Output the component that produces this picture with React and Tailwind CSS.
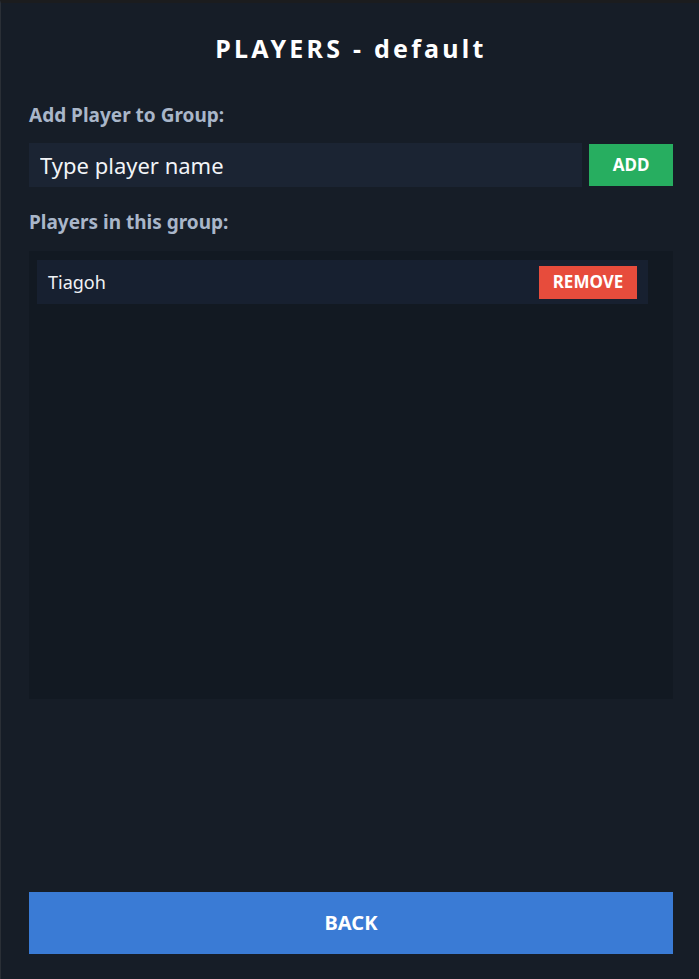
export default function App() {
    const players = ['Tiagoh'];

    return (
        <div
            className="w-[699px] h-[979px] bg-[#161d27] border-t-[3px] border-l border-t-[#1b1c1e] border-l-[#2a2f36] flex flex-col pl-[28px] pr-[26px] pb-[25px]"
            style={{ fontFamily: '"Noto Sans", Lato, sans-serif' }}
        >
            <h1 className="text-center text-white text-[25px] font-bold tracking-[0.13em] mt-[31px] leading-[28px]">
                PLAYERS - default
            </h1>

            <label className="mt-[43px] text-[19px] font-bold text-[#a9b6c9] leading-[20px]">
                Add Player to Group:
            </label>
            <div className="flex gap-[7px] mt-[18px] items-center">
                <input
                    className="flex-1 h-[44px] bg-[#1b2433] text-white text-[22px] px-[11px] outline-none placeholder:text-[#f2f4f7]"
                    placeholder="Type player name"
                />
                <button className="w-[84px] h-[42px] bg-[#27ae60] text-white text-[17px] font-bold">
                    ADD
                </button>
            </div>

            <label className="mt-[25px] text-[19px] font-bold text-[#a9b6c9] leading-[20px]">
                Players in this group:
            </label>
            <div className="mt-[19px] h-[448px] bg-[#121922] pl-[8px] pr-[25px] pt-[9px]">
                {players.map((name) => (
                    <div key={name} className="h-[44px] bg-[#172030] flex items-center justify-between pl-[11px] pr-[11px]">
                        <span className="text-[#f0f2f5] text-[18px]">{name}</span>
                        <button className="w-[98px] h-[33px] bg-[#e74c3c] text-white text-[17px] font-bold">
                            REMOVE
                        </button>
                    </div>
                ))}
            </div>

            <div className="flex-1" />
            <button className="h-[62px] bg-[#3a7bd5] text-white text-[20px] font-bold">
                BACK
            </button>
        </div>
    );
}
